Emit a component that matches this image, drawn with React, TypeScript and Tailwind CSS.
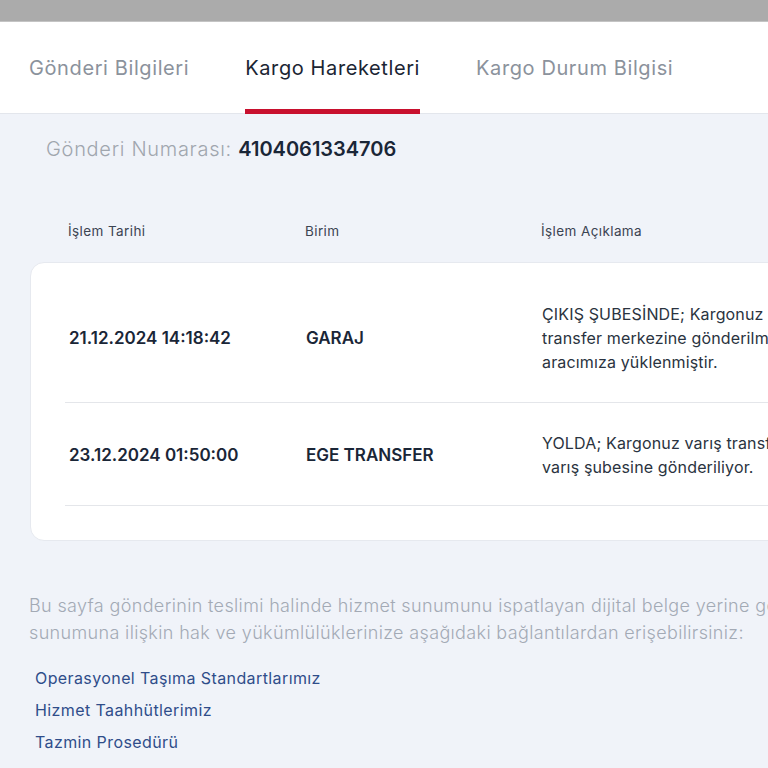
import React from 'react'

const rows = [
  {
    date: '21.12.2024 14:18:42',
    unit: 'GARAJ',
    desc: ['ÇIKIŞ ŞUBESİNDE; Kargonuz çıkış', 'transfer merkezine gönderilmek üzere', 'aracımıza yüklenmiştir.'],
    h: 'h-[140px] pt-[11px]',
  },
  {
    date: '23.12.2024 01:50:00',
    unit: 'EGE TRANSFER',
    desc: ['YOLDA; Kargonuz varış transfer merkezinden', 'varış şubesine gönderiliyor.'],
    h: 'h-[103px] pt-[2px]',
  },
]

export default function App() {
  return (
    <div className="w-[768px] h-[768px] overflow-hidden bg-[#f0f3f9] font-['Inter','Noto_Sans',sans-serif]">
      {/* top bar */}
      <div className="h-[22px] bg-[#ababab] border-b border-[#c4c4c4]" />

      {/* tabs */}
      <div className="h-[92px] bg-white border-b border-[#e3e6ec] flex items-stretch pl-[29px] gap-[56px] text-[20px] tracking-[0.6px]">
        <div className="flex items-center text-[#8b929c] whitespace-nowrap">Gönderi Bilgileri</div>
        <div className="relative flex items-center text-[#1b2533] whitespace-nowrap">
          Kargo Hareketleri
          <span className="absolute left-0 right-0 bottom-[-1px] h-[5px] bg-[#c8102e]" />
        </div>
        <div className="flex items-center text-[#8b929c] whitespace-nowrap">Kargo Durum Bilgisi</div>
      </div>

      {/* number */}
      <div className="pl-[46px] pt-[20px] text-[20px] whitespace-nowrap">
        <span className="text-[#a0a6ae] font-light tracking-[0.7px]">Gönderi Numarası: </span>
        <span className="text-[#1a2637] font-semibold">4104061334706</span>
      </div>

      {/* table header */}
      <div className="flex pl-[68px] mt-[57px] text-[13.5px] tracking-[0.4px] text-[#3c4452] whitespace-nowrap">
        <div className="w-[237px] shrink-0">İşlem Tarihi</div>
        <div className="w-[236px] shrink-0">Birim</div>
        <div>İşlem Açıklama</div>
      </div>

      {/* card */}
      <div className="ml-[30px] mt-[21px] w-[800px] bg-white rounded-l-[14px] border border-[#e6e9ef] pl-[34px] pb-[34px]">
        {rows.map((r) => (
          <div key={r.date} className={`${r.h} flex items-center border-b border-[#e4e6ea]`}>
            <div className="w-[241px] shrink-0 pl-[4px] text-[17px] font-semibold text-[#1a2637] whitespace-nowrap">{r.date}</div>
            <div className="w-[236px] shrink-0 text-[17px] font-semibold text-[#1a2637] whitespace-nowrap">{r.unit}</div>
            <div className="text-[16px] tracking-[0.15px] leading-[24px] text-[#2a3340] whitespace-nowrap">
              {r.desc.map((l) => (
                <div key={l}>{l}</div>
              ))}
            </div>
          </div>
        ))}
      </div>

      {/* info */}
      <div className="pl-[29px] mt-[51px] text-[18px] tracking-[0.35px] leading-[27px] text-[#a3aab5] font-light whitespace-nowrap">
        <div>Bu sayfa gönderinin teslimi halinde hizmet sunumunu ispatlayan dijital belge yerine geçmektedir. Hizmet</div>
        <div>sunumuna ilişkin hak ve yükümlülüklerinize aşağıdaki bağlantılardan erişebilirsiniz:</div>
      </div>

      <div className="pl-[35px] mt-[21px] flex flex-col gap-[10px] text-[16px] tracking-[0.4px] leading-[22px] text-[#2f4d8a] whitespace-nowrap">
        <a href="#">Operasyonel Taşıma Standartlarımız</a>
        <a href="#">Hizmet Taahhütlerimiz</a>
        <a href="#">Tazmin Prosedürü</a>
      </div>
    </div>
  )
}
